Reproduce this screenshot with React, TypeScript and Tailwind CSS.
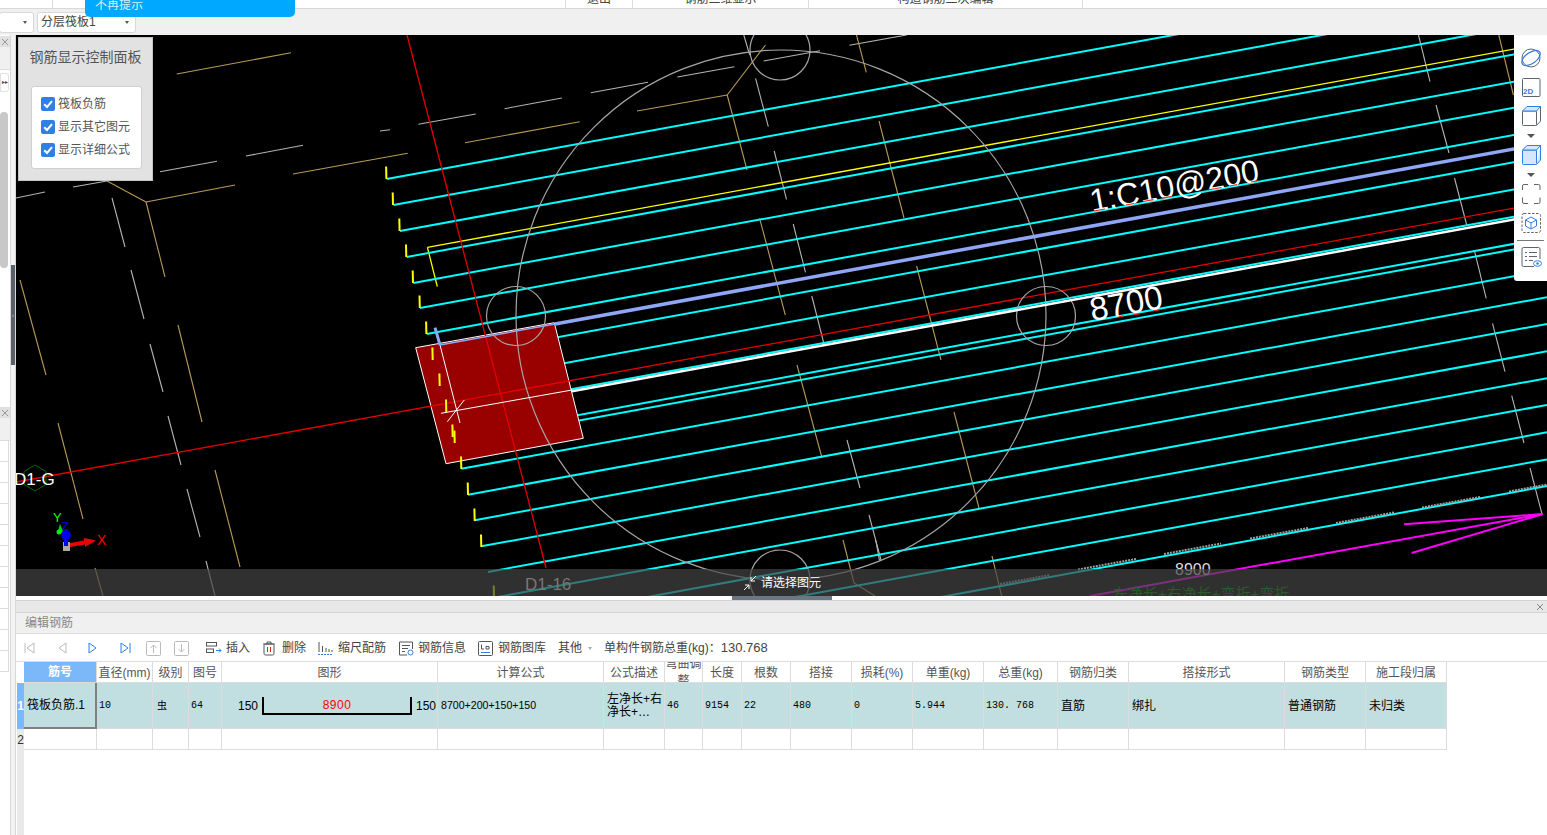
const FONT = "font-['Liberation_Sans','Noto_Sans_CJK_SC',sans-serif]";
const SLOPE = 0.183;

const cyanStarts: [number, number][] = [
  [386.7, 179], [393.4, 205], [400, 231], [406.7, 257], [413.4, 283], [420, 308], [426.7, 334], [433.3, 360], [440, 386], [446.6, 412],
  [453, 438], [454.7, 443.3], [461.3, 468.8], [468, 494.7], [474.7, 520.2], [481.3, 546.3], [488, 572], [494.6, 597.5], [501.3, 623.7], [508, 649.5], [514.6, 675],
];
const gray: number[][] = [
  [380,131,390,129.7],[418.4,124.3,475.7,114],[504.6,108.7,561.9,98],[590.8,92.7,648,82.3],[677.4,77,734.3,66.7],[763.6,61,820,50.7],[849.4,45.3,906.7,35],
  [160,171.7,217,161.3],[246,156,303,145.3],[73,187,107,181],[16,198,45,192],
  [112,198,125,247],[131,270,144,319],[150,344,163,392],[168,416,181,465],[187,489,200,537],[206,561,215,596],
  [743.8,35,749.7,55],[755.6,78.3,768.3,126.7],[774.2,151,786.5,199.3],[793.2,224,805.5,272.3],[811.8,296,824,344],[847,440,860,488],[869,515,881,560],
  [875.7,540,879.5,560.7],[1418.5,35,1430,81.7],[1436,105,1449,153],[1454.5,178,1466.7,225],[1474.4,250.7,1486.2,298.3],[1492.5,323.3,1505,371.7],[1511.7,395.7,1524,443],[1530,468,1542,514],
];
const tan: number[][] = [
  [176.7,74,291,52.7],[293,174,407.7,153.3],[465,142.7,579.7,121.7],[637,111,727.2,95],[727.2,95,765.5,45],[727.2,95,747,170],[856.5,35,866.3,72.3],[879,121,904,218],
  [759.6,218.3,785.3,315],[916.6,266,941,360],[797,365,822,458],[954,412,979,508],[843,540,854,583],[854,583,875,596],[992,556,1001.6,596],[1498.8,35,1513.4,95],
  [146,202,235,185],[107,181,146,202],[146,202,165,277],[20,280,46,375],[178,325,202,422],[58,423,83,519],[215,470,240,567],[95,568,103,596],
];
const dashes: number[][] = [
  [1078,569.5,1136,559],[1164,554,1221,543.5],[1250,538.5,1308,528],[1336,523,1394,512.5],[1422,507.5,1480,497],[1509,491.5,1547,484.5],[1000,584,1050,575],
];
const ticks: [number, number][] = [
  [386.4,179],[393,205],[399.6,231],[406.3,257],[413,283],[419.8,308],[426.4,334],[432.7,360],[439.7,386],[446.3,412],[452.7,437],[454.7,443],[461.3,469],[468,495],[474.7,521],[481.3,547],[494,598],
];

function Canvas() {
  return (
    <svg width="1531" height="561" viewBox="16 35 1531 561" className="block">
      <rect x="16" y="35" width="1531" height="561" fill="#000" />
      {gray.map((l, i) => <line key={i} x1={l[0]} y1={l[1]} x2={l[2]} y2={l[3]} stroke="#b4b4b4" strokeWidth="1.1" />)}
      {tan.map((l, i) => <line key={i} x1={l[0]} y1={l[1]} x2={l[2]} y2={l[3]} stroke="#b89a58" strokeWidth="1.1" />)}
      <line x1="427.4" y1="247.3" x2="1547" y2="43" stroke="#ffff00" strokeWidth="1.3" />
      <line x1="427.4" y1="247.3" x2="437.3" y2="286.7" stroke="#ffff00" strokeWidth="1.3" />
      {cyanStarts.map(([x, y], i) => (
        <line key={i} x1={x} y1={y} x2={1547} y2={y - SLOPE * (1547 - x)} stroke="#00ffff" strokeWidth="2" />
      ))}
      {dashes.map((l, i) => <line key={i} x1={l[0]} y1={l[1]} x2={l[2]} y2={l[3]} stroke="#a0a0a0" strokeWidth="2" strokeDasharray="2 1" />)}
      <polygon points="415.7,347.7 554.3,322.7 583.3,438.3 446,463.7" fill="#990000" stroke="#fff" strokeWidth="1" />
      <line x1="16" y1="482" x2="1547" y2="202" stroke="#e60000" strokeWidth="1.3" />
      <line x1="407" y1="35" x2="546" y2="568" stroke="#e60000" strokeWidth="1.3" />
      <circle cx="781" cy="315" r="265" fill="none" stroke="#a6a6a6" strokeWidth="1.2" />
      <circle cx="780" cy="50" r="30" fill="none" stroke="#a6a6a6" strokeWidth="1.2" />
      <circle cx="516" cy="316" r="29.5" fill="none" stroke="#a6a6a6" strokeWidth="1.2" />
      <circle cx="1046" cy="316" r="29.5" fill="none" stroke="#a6a6a6" strokeWidth="1.2" />
      <circle cx="780" cy="580" r="30" fill="none" stroke="#a6a6a6" strokeWidth="1.2" />
      <line x1="440" y1="345" x2="460" y2="423" stroke="#fff" strokeWidth="1" />
      <line x1="441" y1="413.3" x2="572" y2="390" stroke="#fff" strokeWidth="1" />
      <line x1="447.3" y1="421.7" x2="464.3" y2="400" stroke="#fff" strokeWidth="1" />
      <line x1="572" y1="391.2" x2="1547" y2="213.4" stroke="#fff" strokeWidth="2.5" />
      <line x1="440" y1="345" x2="555" y2="324" stroke="#8ea6f5" strokeWidth="1.5" />
      <line x1="555" y1="324" x2="1547" y2="143" stroke="#8ea6f5" strokeWidth="3.5" />
      <line x1="435" y1="327.7" x2="440" y2="345" stroke="#8ea6f5" strokeWidth="3" />
      {ticks.map(([x, y], i) => <line key={i} x1={x - 0.3} y1={y - 12.5} x2={x} y2={y} stroke="#ffff00" strokeWidth="2" />)}
      <g stroke="#ff00ff" strokeWidth="2" fill="none">
        <line x1="1090" y1="596" x2="1543" y2="514" />
        <line x1="1404" y1="524.3" x2="1543" y2="514" />
        <line x1="1411.6" y1="553" x2="1543" y2="514" />
      </g>
      <g transform="translate(1092 212) rotate(-10.4)">
        <text x="0" y="0" fill="#fff" fontSize="32" fontFamily="Liberation Sans, sans-serif">1:C10@200</text>
      </g>
      <g stroke="#ee2222" strokeWidth="1.2">
        <line x1="1094" y1="211" x2="1105" y2="209" /><line x1="1126" y1="205" x2="1134" y2="203.5" /><line x1="1143" y1="201.5" x2="1153.5" y2="199.6" />
        <line x1="1162" y1="198.2" x2="1171" y2="196.6" /><line x1="1207.5" y1="190" x2="1221.5" y2="187.5" /><line x1="1230" y1="186" x2="1237" y2="184.7" /><line x1="1251" y1="182" x2="1258" y2="180.7" />
        <line x1="1118" y1="317" x2="1124" y2="316" /><line x1="1133" y1="315" x2="1140" y2="313.6" /><line x1="1153" y1="311" x2="1160" y2="309.6" />
      </g>
      <g transform="translate(1092 321) rotate(-10.4)">
        <text x="0" y="0" fill="#fff" fontSize="33" fontFamily="Liberation Sans, sans-serif">8700</text>
      </g>
      <polygon points="35,465 46,471.5 46,484.5 35,491 24,484.5 24,471.5" fill="none" stroke="#0a6a0a" strokeWidth="1" />
      <text x="14" y="485" fill="#fff" fontSize="17" fontFamily="Liberation Sans, sans-serif">D1-G</text>
      <polygon points="60,524 64,533 57,534" fill="#00cc00" />
      <circle cx="59" cy="532" r="2.5" fill="#00ee00" />
      <text x="53" y="522" fill="#00ff00" fontSize="13" fontFamily="Liberation Sans, sans-serif">Y</text>
      <text x="62" y="530" fill="#0000ff" fontSize="11" fontFamily="Liberation Sans, sans-serif">Z</text>
      <text x="97" y="545" fill="#ff0000" fontSize="14" fontFamily="Liberation Sans, sans-serif">X</text>
      <rect x="63" y="542" width="7" height="9" fill="#aaa" />
      <line x1="66" y1="535" x2="66" y2="546" stroke="#0000ff" strokeWidth="4" />
      <circle cx="66" cy="535" r="5" fill="#0000ee" />
      <polygon points="70,543 84,540.5 84,538 96,540.5 85,547 85,544.5 70,547" fill="#ee0000" />
      <text x="1175" y="575" fill="#ddd" fontSize="16" fontFamily="Liberation Sans, sans-serif">8900</text>
    </svg>
  );
}

function Check() {
  return (
    <span className="w-[14px] h-[14px] rounded-[2px] bg-[#2f7fe6] flex items-center justify-center shrink-0">
      <svg width="12" height="12" viewBox="0 0 12 12"><path d="M2.2 6.2 L5 9 L10 3.2" fill="none" stroke="#fff" strokeWidth="2" /></svg>
    </span>
  );
}

function ControlPanel() {
  return (
    <div className="absolute left-[2px] top-[2px] w-[135px] h-[144px] bg-[#e2e2e2] border border-[#c4c4c4] px-[12px]">
      <div className="text-[14px] text-[#555] leading-[20px] mt-[9px] text-center whitespace-nowrap -mx-2">钢筋显示控制面板</div>
      <div className="mt-[19px] w-[111px] h-[83px] bg-white border border-[#d0d0d0] rounded-[3px] pl-[9px] pt-[10px] flex flex-col gap-[9px]">
        {["筏板负筋", "显示其它图元", "显示详细公式"].map((t) => (
          <div key={t} className="flex items-center gap-[3px] h-[14px] text-[12px] text-[#555] whitespace-nowrap"><Check />{t}</div>
        ))}
      </div>
    </div>
  );
}

function ToolIcon({ children, h = 20 }: { children: React.ReactNode; h?: number }) {
  return <svg width="22" height={h} viewBox={`0 0 22 ${h}`} className="block shrink-0" fill="none" strokeLinejoin="round">{children}</svg>;
}

function Caret() {
  return <span className="block w-0 h-0 border-l-[4px] border-r-[4px] border-t-[4px] border-l-transparent border-r-transparent border-t-[#555]" />;
}

function RightBar() {
  const b = "#2f7fe6", d = "#5c6470";
  return (
    <div className="absolute right-0 top-0 w-[33px] h-[246px] bg-white rounded-bl-[3px] flex flex-col items-center pt-[12px]">
      <ToolIcon h={22}>
        <circle cx="11" cy="11" r="9" stroke={d} strokeWidth="1" />
        <ellipse cx="11" cy="11" rx="10.5" ry="5.5" transform="rotate(-35 11 11)" stroke={b} strokeWidth="1.3" />
      </ToolIcon>
      <div className="h-[9px]" />
      <ToolIcon h={19}>
        <rect x="2.5" y="0.5" width="17.5" height="18" rx="1" stroke={d} />
        <text x="3" y="16" fontSize="8" fontWeight="700" fill={b} stroke="none" fontFamily="Liberation Sans, sans-serif">2D</text>
      </ToolIcon>
      <div className="h-[9px]" />
      <ToolIcon h={20}>
        <rect x="2.5" y="5" width="14" height="14.5" rx="1" stroke={d} />
        <path d="M2.5 5 L7 0.5 H20.5 L16.5 5 Z" stroke={b} fill="#d6e6fb" />
        <path d="M16.5 19.5 L20.5 15 V0.5" stroke={d} />
      </ToolIcon>
      <div className="h-[8px]" /><Caret /><div className="h-[7px]" />
      <ToolIcon h={20}>
        <rect x="2.5" y="5" width="14" height="14.5" rx="1" stroke={b} fill="#d6e6fb" />
        <path d="M2.5 5 L7 0.5 H20.5 L16.5 5 Z M16.5 19.5 L20.5 15 V0.5" stroke={b} fill="#d6e6fb" />
      </ToolIcon>
      <div className="h-[8px]" /><Caret /><div className="h-[7px]" />
      <ToolIcon h={20}>
        <path d="M2.5 6 V2 Q2.5 0.5 4 0.5 H8 M14 0.5 H18.5 Q20 0.5 20 2 V6 M20 13.5 V18 Q20 19.5 18.5 19.5 H14 M8 19.5 H4 Q2.5 19.5 2.5 18 V13.5" stroke={d} />
      </ToolIcon>
      <div className="h-[9px]" />
      <ToolIcon h={20}>
        <rect x="2" y="0.5" width="18.5" height="19" rx="2" stroke={d} strokeDasharray="2.5 1.5" />
        <path d="M11 4 L16.5 7 V13 L11 16 L5.5 13 V7 Z M5.5 7 L11 10 L16.5 7 M11 10 V16" stroke={b} />
      </ToolIcon>
      <div className="w-[27px] h-px bg-[#777] mt-[7px] mb-[6px]" />
      <ToolIcon h={20}>
        <path d="M14 19.5 H3.5 Q2 19.5 2 18 V2 Q2 0.5 3.5 0.5 H18.5 Q20 0.5 20 2 V12" stroke={d} />
        <path d="M5 5.5 H7 M9 5.5 H17 M5 9.5 H7 M9 9.5 H17 M5 13.5 H7 M9 13.5 H13" stroke={d} />
        <ellipse cx="17.5" cy="16.5" rx="4" ry="2.8" stroke={b} />
        <circle cx="17.5" cy="16.5" r="1.2" fill={b} />
      </ToolIcon>
    </div>
  );
}

function StatusOverlay() {
  return (
    <div className="absolute left-0 right-0 bottom-0 h-[27px] bg-[#454545]/70 overflow-hidden">
      <div className="absolute left-[509px] top-[6px] text-[17px] text-[#777] leading-[20px] whitespace-nowrap">D1-16</div>
      <div className="absolute left-[1097px] top-[15px] text-[15px] text-[#2c5a2c] leading-[20px] whitespace-nowrap">左净长+右净长+弯折+弯折</div>
      <div className="absolute left-[726px] top-[5px] flex items-center gap-[3px] text-white text-[12px] leading-[18px]">
        <svg width="16" height="16" viewBox="0 0 16 16" fill="none" stroke="#fff" strokeWidth="1">
          <path d="M14 1 L9 6 M9 2 V6 H13 M2 15 L7 10 M3 10 H7 V14" />
        </svg>
        <span className="whitespace-nowrap">请选择图元</span>
      </div>
    </div>
  );
}

const NavIcon = ({ d, c, line }: { d: string; c: string; line?: string }) => (
  <svg width="14" height="14" viewBox="0 0 14 14" fill="none" stroke={c} strokeWidth="1" className="shrink-0"><path d={d} />{line && <path d={line} />}</svg>
);

function ActionItem({ icon, label, w }: { icon: React.ReactNode; label: string; w: string }) {
  return <div className={`flex items-center h-full ${w}`}><span className="flex w-[20px] shrink-0">{icon}</span><span className="whitespace-nowrap">{label}</span></div>;
}

function Toolbar() {
  const b = "#2f7fe6", d = "#555";
  return (
    <div className="h-[28px] bg-white flex items-center pl-[7px] pt-px text-[12px] text-[#444] border-b border-[#dcdcdc] shrink-0">
      <div className="w-[32px] flex"><NavIcon c="#bbb" d="M11 2 V12 L4 7 Z" line="M2 2 V12" /></div>
      <div className="w-[31px] flex"><NavIcon c="#bbb" d="M11 2 V12 L4 7 Z" /></div>
      <div className="w-[32px] flex"><NavIcon c={b} d="M3 2 V12 L10 7 Z" /></div>
      <div className="w-[28px] flex"><NavIcon c={b} d="M3 2 V12 L10 7 Z" line="M12 2 V12" /></div>
      <div className="w-[28px] flex"><svg width="15" height="15" viewBox="0 0 15 15" fill="none" stroke="#bbb"><rect x="0.5" y="0.5" width="14" height="14" rx="1" /><path d="M7.5 12 V4 M4.5 7 L7.5 4 L10.5 7" /></svg></div>
      <div className="w-[32px] flex"><svg width="15" height="15" viewBox="0 0 15 15" fill="none" stroke="#bbb"><rect x="0.5" y="0.5" width="14" height="14" rx="1" /><path d="M7.5 3 V11 M4.5 8 L7.5 11 L10.5 8" /></svg></div>
      <ActionItem w="w-[56px]" label="插入" icon={<svg width="16" height="14" viewBox="0 0 16 14" fill="none" stroke={d}><rect x="0.5" y="1.5" width="10" height="3.5" /><rect x="0.5" y="8" width="7" height="3.5" /><path d="M10 9.5 H15 M13 7.5 L15 9.5 L13 11.5" stroke={b} /></svg>} />
      <ActionItem w="w-[56px]" label="删除" icon={<svg width="14" height="15" viewBox="0 0 14 15" fill="none" stroke={d}><path d="M1 3 H13 M5 3 V1 H9 V3" /><rect x="2" y="3" width="10" height="11" rx="1.5" /><path d="M5.5 6 V11 M8.5 6 V11" stroke="#d22" /></svg>} />
      <ActionItem w="w-[80px]" label="缩尺配筋" icon={<svg width="15" height="15" viewBox="0 0 15 15" fill="none" stroke={d}><path d="M1 1 V11 M4.5 5 V11 M8 7 V11 M11 8 V11 M14 9 V11" /><path d="M0 13.5 H15" stroke={b} strokeDasharray="2 1" /></svg>} />
      <ActionItem w="w-[80px]" label="钢筋信息" icon={<svg width="16" height="15" viewBox="0 0 16 15" fill="none" stroke={d}><path d="M9 14 H1.5 V1 H14.5 V8" /><path d="M4 4.5 H12 M4 7.5 H10 M4 10.5 H7" /><circle cx="12.5" cy="11.5" r="2.5" stroke={b} /></svg>} />
      <ActionItem w="w-[80px]" label="钢筋图库" icon={<svg width="15" height="15" viewBox="0 0 15 15" fill="none" stroke={d}><rect x="0.5" y="0.5" width="14" height="14" rx="1" /><path d="M3.5 3.5 V8 H6 M8 8 V5.5 H11 V8 H8" /><path d="M3 11.5 H12" stroke={b} /></svg>} />
      <span className="whitespace-nowrap">其他</span>
      <span className="ml-[6px] mr-[12px] w-0 h-0 border-l-[2.5px] border-r-[2.5px] border-t-[3px] border-l-transparent border-r-transparent border-t-[#aaa]" />
      <span className="whitespace-nowrap">单构件钢筋总重(kg)：<span className="text-[13px]">130.768</span></span>
    </div>
  );
}

const headers = ["筋号","直径(mm)","级别","图号","图形","计算公式","公式描述","弯曲调整","长度","根数","搭接","损耗(%)","单重(kg)","总重(kg)","钢筋归类","搭接形式","钢筋类型","施工段归属"];
const GRID = "grid grid-cols-[73px_56px_36px_33px_216px_166px_61px_38px_39px_49px_61px_61px_71px_74px_71px_156px_81px_81px]";

function NumCell({ t }: { t: string }) {
  return <div className="border-r border-b border-[#dcdcdc] flex items-center pl-[2px] font-['Liberation_Mono',monospace] text-[10px] text-black whitespace-pre overflow-hidden">{t}</div>;
}
function CjkCell({ t }: { t: string }) {
  return <div className="border-r border-b border-[#dcdcdc] flex items-center pl-[3px] text-[12px] text-black whitespace-nowrap overflow-hidden">{t}</div>;
}

function Table() {
  return (
    <div className="flex flex-1">
      <div className="w-[7px] ml-px flex flex-col bg-[#e9e9e9]">
        <div className="h-[21px] bg-white" />
        <div className="h-[46px] bg-[#7ab8fa] flex items-center justify-center text-white font-bold text-[12px]">1</div>
        <div className="h-[21px] flex items-center justify-center text-[12px] text-[#333]">2</div>
      </div>
      <div className="w-[1423px]">
        <div className={`${GRID} h-[21px] text-[12px] text-[#555]`}>
          {headers.map((h, i) => (
            <div key={h} className={`flex items-center justify-center text-center overflow-hidden border-r border-b border-[#dcdcdc] ${i === 0 ? "bg-[#7ab8fa] text-white font-bold" : "pt-px"} ${i === 7 ? "leading-[17px]" : ""}`}>{h}</div>
          ))}
        </div>
        <div className={`${GRID} h-[46px] bg-[#c1dee0]`}>
          <div className="border-r-2 border-b-2 border-[#808080] flex items-center pl-[3px] text-[12px] text-black whitespace-nowrap">筏板负筋.1</div>
          <NumCell t="10" />
          <div className="border-r border-b border-[#dcdcdc] flex items-center pl-[4px] text-[10px] text-black">虫</div>
          <NumCell t="64" />
          <div className="border-r border-b border-[#dcdcdc] flex items-center pl-[16px] font-['Liberation_Sans',sans-serif] text-[12px] text-black">
            <span className="w-[24px]">150</span>
            <div className="w-[150px] h-[18px] border-l-2 border-r-2 border-b-2 border-black flex items-center justify-center text-[#ff0000] text-[12px] tracking-[0.5px]">8900</div>
            <span className="ml-[4px]">150</span>
          </div>
          <div className="border-r border-b border-[#dcdcdc] flex items-center pl-[3px] font-['Liberation_Sans',sans-serif] text-[10.6px] text-black whitespace-nowrap">8700+200+150+150</div>
          <div className="border-r border-b border-[#dcdcdc] flex items-center pl-[3px] text-[12px] leading-[13px] text-black">左净长+右<br />净长+…</div>
          <NumCell t="46" />
          <NumCell t="9154" />
          <NumCell t="22" />
          <NumCell t="480" />
          <NumCell t="0" />
          <NumCell t="5.944" />
          <NumCell t="130. 768" />
          <CjkCell t="直筋" />
          <CjkCell t="绑扎" />
          <CjkCell t="普通钢筋" />
          <CjkCell t="未归类" />
        </div>
        <div className={`${GRID} h-[21px]`}>
          {headers.map((h) => <div key={h} className="border-r border-b border-[#dcdcdc]" />)}
        </div>
      </div>
    </div>
  );
}

function CloseX({ c = "#999" }: { c?: string }) {
  return <svg width="8" height="8" viewBox="0 0 8 8" stroke={c} fill="none"><path d="M1 1 L7 7 M7 1 L1 7" /></svg>;
}

function Sidebar() {
  return (
    <div className="w-[16px] shrink-0 flex bg-white">
      <div className="w-[11px] flex flex-col border-r border-[#d8d8d8]">
        <div className="h-[372px] flex flex-col">
          <div className="h-[11px] mt-px bg-[#e0e0e0] flex items-center justify-center"><CloseX /></div>
          <div className="h-[23px] bg-[#f0f0f0] border-b border-[#dcdcdc]" />
          <div className="h-[19px] w-[9px] mt-[3px] bg-white border border-[#e0e0e0] rounded-r-[3px] text-[6px] leading-[17px] text-[#444] text-center">▸▸</div>
          <div className="w-[8px] h-[156px] mt-[20px] bg-[#c8c8c8] rounded-[4px]" />
        </div>
        <div className="h-[11px] bg-[#e0e0e0] flex items-center justify-center"><CloseX /></div>
        <div className="h-[23px] bg-[#f0f0f0] border-b border-[#dcdcdc]" />
        {[0,1,2,3,4,5,6,7,8,9,10].map((i) => <div key={i} className="h-[21px] border-b border-[#dcdcdc] w-[9px] border-r" />)}
      </div>
      <div className="w-[5px] bg-[#f3f3f3] border-r border-[#d8d8d8] flex flex-col">
        <div className="h-[230px]" />
        <div className="h-[100px] bg-[#5a6068] flex items-center justify-center text-[6px] text-[#ccc]">‹</div>
      </div>
    </div>
  );
}

export default function App() {
  return (
    <div className={`relative w-[1547px] h-[835px] overflow-hidden bg-white flex flex-col ${FONT}`}>
      <div className="h-[9px] bg-white border-b border-[#d8d8d8] flex text-[12px] text-[#444] overflow-hidden leading-[12px] shrink-0">
        <div className="w-[53px] border-r border-[#dcdcdc]" />
        <div className="w-[513px] border-r border-[#dcdcdc]" />
        <div className="w-[67px] border-r border-[#dcdcdc] text-center -mt-[7px]">退出</div>
        <div className="w-[176px] border-r border-[#dcdcdc] text-center -mt-[7px]">钢筋三维显示</div>
        <div className="w-[274px] border-r border-[#dcdcdc] text-center -mt-[7px]">构造钢筋二次编辑</div>
      </div>
      <div className="h-[26px] bg-[#f0f0f0] flex items-center gap-[3px] shrink-0 text-[12px] text-[#444]">
        <div className="w-[35px] -ml-px h-[21px] bg-white border border-[#d8d8d8] rounded-[3px] flex items-center justify-end pr-[6px]"><span className="w-0 h-0 border-l-[2.5px] border-r-[2.5px] border-t-[3px] border-l-transparent border-r-transparent border-t-[#555]" /></div>
        <div className="w-[99px] h-[21px] bg-white border border-[#d8d8d8] rounded-[3px] flex items-center justify-between pl-[3px] pr-[6px]">
          <span className="whitespace-nowrap">分层筏板1</span>
          <span className="w-0 h-0 border-l-[2.5px] border-r-[2.5px] border-t-[3px] border-l-transparent border-r-transparent border-t-[#555]" />
        </div>
      </div>
      <div className="flex flex-1 min-h-0">
        <Sidebar />
        <div className="flex-1 flex flex-col min-w-0">
          <div className="relative h-[561px] shrink-0 overflow-hidden">
            <Canvas />
            <ControlPanel />
            <RightBar />
            <StatusOverlay />
          </div>
          <div className="h-[4px] bg-white shrink-0 pl-[716px]">
            <div className="w-[100px] h-[4px] bg-[#6b7785]" />
          </div>
          <div className="h-[13px] bg-[#e8e8e8] border-y border-[#d4d4d4] flex items-center justify-end pr-[3px] shrink-0"><CloseX c="#888" /></div>
          <div className="h-[21px] bg-[#f0f0f0] flex items-center pl-[9px] text-[12px] text-[#888] border-b border-[#dcdcdc] shrink-0">编辑钢筋</div>
          <Toolbar />
          <Table />
        </div>
      </div>
      <div className="absolute left-[85px] top-0 w-[210px] h-[17px] bg-[#00a8ff] rounded-b-[5px] pl-[10px] text-[12px] leading-[10px] text-[#d8f0ff] overflow-hidden">不再提示</div>
    </div>
  );
}
